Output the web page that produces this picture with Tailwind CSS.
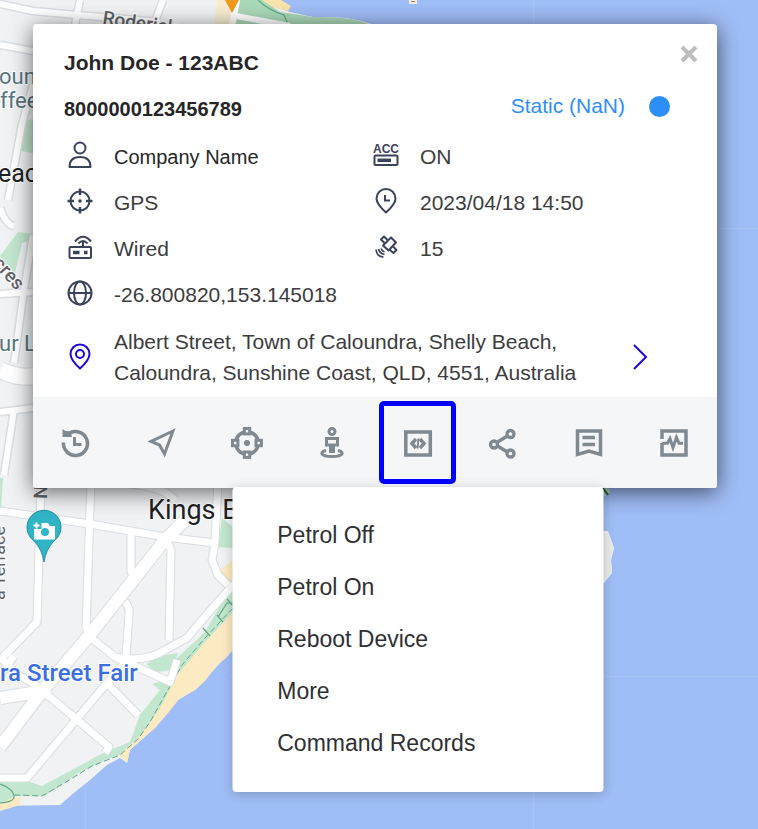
<!DOCTYPE html>
<html lang="en">
<head>
<meta charset="utf-8">
<meta name="viewport" content="width=device-width, initial-scale=1">
<title>Vehicle tracker</title>
<script src="https://cdn.jsdelivr.net/npm/@tailwindcss/browser@4"></script>
</head>
<body class="font-['Liberation_Sans',Arial,sans-serif] text-[21px] text-[#3c3c3e]">
<main class="relative min-h-screen overflow-hidden bg-[#9fbdf6] px-[33px] py-6 [@media(min-width:700px)]:pr-[41px]">

  <!-- Map -->
  <svg class="absolute inset-0 h-full w-full font-[Roboto,sans-serif]" viewBox="0 0 758 829" preserveAspectRatio="xMinYMin slice" role="img" aria-label="Map of Caloundra">
    <rect width="758" height="829" fill="#9fbdf6"/>
    <g stroke="#a9c4f7" stroke-width="1"><path d="M85.500 750V829M533.500 0V829M230 676.500H758M700 228.500H758"/></g>
    <!-- land -->
    <path d="M0 0H258L290 12 313 17Q350 16 368 23L500 60V480L606 490 600 500V531L608 531 614 548 611 560 612 573 604 583 500 600 233 648 205 680 195 690 178 700 155 728 130 750 127 763 120 758 107 765 90 780 75 792 60 805 0 806Z" fill="#f0f2f4"/>
    <path d="M604 500H616V530H604Z" fill="#9fbdf6"/>
    <path d="M603 531Q611 536 614 548L611 560 612 573 603 583Z" fill="#ebebeb"/>
    <path d="M594 476L608 494" stroke="#b9e0cd" stroke-width="7"/><path d="M594 476L608 495" stroke="#2c6650" stroke-width="2"/>
    <!-- beach -->
    <path d="M258 0L281 0 291 6 288 11 275 8Z" fill="#f9e3ac"/>
    <path d="M217 0H238V24H214Z" fill="#f8ecd0"/>
    <path d="M233 603V650L226 658 216 666 205 681 195 690 180 698 168 713 155 728 144 737 130 750 127 763 119 756 140 735 160 705 180 670Z" fill="#fbeac2"/>
    <path d="M233 560L219 571 222 580 228 584 233 580Z" fill="#fbeac2"/>
    <path d="M0 811L20 805 22 797 0 800Z" fill="#fbeac2"/>
    <!-- parks -->
    <g fill="#c3e6cf">
      <path d="M240 0H262L280 12 313 17Q350 16 368 24H236Z" fill="#a9d8b8"/>
      <path d="M24 121L33 119V153L21 151Z"/>
      <path d="M0 256L18 232 33 234V240L22 243 14 277Z"/>
      <path d="M0 478H3L1 510H0Z"/>
      <path d="M222 518L233 527V548L218 547Z"/>
      <path d="M233 583V612L205 642 178 674 160 708 140 736 119 755 105 760 80 772 45 796 15 796 0 804V782H30L42 786 105 752 130 742 140 715 160 690 152 684 167 680 175 660 205 632Z"/>
      <path d="M146 664L160 656 178 653 172 670 155 672Z"/>
    </g>
    <path d="M233 608L205 638 182 665 165 695 150 722 138 739 120 755 92 766 66 782 42 796 15 795" fill="none" stroke="#62a983" stroke-width="1" stroke-dasharray="6 3"/>
    <path d="M0 784Q12 788 14 795T0 803M203 628L210 636M217 615L223 622M227 599L233 606M218 617L227 603 233 603M258 0Q268 10 284 15L288 24" fill="none" stroke="#62a983" stroke-width="1.200"/>
    <!-- roads: casing, then surface -->
    <g fill="none" stroke="#dadde1" stroke-linejoin="round">
      <path stroke-width="9" d="M0 4L33 11 77 15 160 22M80 0L74 30M163 0L154 24M0 45L33 51M33 85L22 124 8 200M0 208Q6 225 14 226M33 235L24 290 14 363M33 292L0 294M0 412L33 408M14 410L4 475"/>
      <path stroke-width="9" d="M0 511L90 524 165 537 215 543M41 480L37 622 3 657M91 480L86 628 91 637M131 530V572L137 578M165 537L171 550 169 640M125 602Q130 607 129 615L126 655M90 637L115 657Q145 663 165 650L187 638 215 605 235 583M218 480L215 543 212 560 218 575 228 585M45 693L75 718 109 747 105 753M107 683L138 715M0 778H27L107 683 130 657M100 483Q160 482 175 500M0 657L18 675 45 690M115 657L170 682 177 660M14 656L0 675"/>
      <path stroke-width="14" d="M185 520L165 540 88 637 43 690 0 747M0 698L50 690"/>
      <path stroke-width="18" d="M0 370Q20 380 40 375"/>
    </g>
    <g fill="none" stroke="#ffffff" stroke-linejoin="round">
      <path stroke-width="6" d="M0 4L33 11 77 15 160 22M80 0L74 30M163 0L154 24M0 45L33 51M33 85L22 124 8 200M0 208Q6 225 14 226M33 235L24 290 14 363M33 292L0 294M0 412L33 408M14 410L4 475M237 0L232 24M236 16L290 26"/>
      <path stroke-width="7" d="M0 511L90 524 165 537 215 543M41 480L37 622 3 657M91 480L86 628 91 637M131 530V572L137 578M165 537L171 550 169 640M125 602Q130 607 129 615L126 655M90 637L115 657Q145 663 165 650L187 638 215 605 235 583M218 480L215 543 212 560 218 575 228 585M45 693L75 718 109 747 105 753M107 683L138 715M0 778H27L107 683 130 657M100 483Q160 482 175 500M0 657L18 675 45 690M115 657L170 682 177 660M14 656L0 675"/>
      <path stroke-width="12" d="M185 520L165 540 88 637 43 690 0 747M0 698L50 690"/>
      <path stroke-width="16" d="M0 370Q20 380 40 375"/>
    </g>
    <!-- pins -->
    <path d="M225 0H239L232 13Z" fill="#f29a1e"/>
    <path d="M410 0H416V3H410Z" fill="#b87445" stroke="#f2ede8" stroke-width="2"/>
    <path d="M44 562Q42 549 34 541A17 17 0 1 1 54 541Q46 549 44 562Z" fill="#2fb5c6" stroke="#2593a2" stroke-width="1"/>
    <path d="M34 529V539.500H55V526H50L48 523H41.500V529Z" fill="#fff"/><circle cx="45" cy="532" r="4" fill="#2fb5c6"/><path d="M36.500 522.500V528.500M33.500 525.500H39.500" stroke="#fff" stroke-width="2"/>
    <!-- labels -->
    <g stroke="#fff" stroke-width="2" paint-order="stroke" stroke-linejoin="round">
      <text x="148" y="519" font-size="27" fill="#202124">Kings Beach</text>
      <text x="0" y="681" font-size="24" font-weight="500" fill="#3b6fe0">ra Street Fair</text>
      <text x="-2" y="182" font-size="25" fill="#202124">each</text>
      <g font-size="22" fill="#56757f"><text x="-1" y="84">oun</text><text x="0" y="108">ffee</text><text x="-1" y="351">ur L</text></g>
      <g font-size="19" font-weight="500" fill="#5f6368">
        <text transform="translate(102 24) rotate(8)">Roderick</text>
        <text transform="translate(-8 264) rotate(48)">cres</text>
        <text transform="translate(47 499) rotate(-88)">N</text>
        <text font-size="18" font-weight="400" transform="translate(5 600) rotate(-90)">a Terrace</text>
      </g>
    </g>
  </svg>

  <!-- Device card -->
  <section class="relative rounded-[4px] bg-white shadow-[0_4px_22px_rgba(0,0,0,0.6)]" aria-label="Device details">
    <div class="px-[31px] pt-4">
      <header class="relative">
        <h1 class="flex h-[46px] items-center font-bold text-[#262628]">John Doe - 123ABC</h1>
        <button type="button" aria-label="Close" class="absolute -top-1 right-[-21px] flex size-9 items-center justify-center text-[#bdbdbd]">
          <svg class="size-[18px]" viewBox="0 0 18 18" fill="none" stroke="currentColor" stroke-width="4" aria-hidden="true"><path d="M2 2L16 16M16 2L2 16"/></svg>
        </button>
        <div class="flex h-[46px] items-center justify-between pr-4">
          <p class="text-[20px] font-bold text-[#262628]">8000000123456789</p>
          <p class="flex items-center gap-6 pb-1.5 text-[#2e8ef7]">Static (NaN) <span class="size-[21px] rounded-full bg-[#2e8ef7]"></span></p>
        </div>
      </header>

      <ul class="grid grid-cols-[306fr_316fr] pt-0.5 leading-[46px]">
        <li class="flex items-center gap-[18px] text-[20px] text-[#262628]">
          <svg class="h-7 w-8 shrink-0 -translate-y-0.5" viewBox="0 0 32 28" fill="none" stroke="#3b435a" stroke-width="2" aria-hidden="true"><circle cx="16" cy="7" r="5.500"/><path d="M5.500 26Q5.500 16 16 16T26.500 26Z" stroke-linejoin="round"/></svg>
          Company Name</li>
        <li class="flex items-center gap-[18px]">
          <svg class="h-7 w-8 shrink-0 -translate-y-0.5" viewBox="0 0 32 28" aria-hidden="true"><text x="16" y="12" text-anchor="middle" font-size="12" font-weight="bold" fill="#3b435a">ACC</text><rect x="4.500" y="14.500" width="23" height="9.500" rx="1" fill="none" stroke="#3b435a" stroke-width="2"/><path d="M7.500 19.300H21" stroke="#3b435a" stroke-width="3.500"/></svg>
          ON</li>
        <li class="flex items-center gap-[18px]">
          <svg class="h-7 w-8 shrink-0 -translate-y-0.5" viewBox="0 0 32 28" fill="none" stroke="#3b435a" stroke-width="2" aria-hidden="true"><circle cx="16" cy="14" r="9.500"/><path d="M16 1.500V8M16 20V26.500M3.500 14H10M22 14H28.500" stroke-width="2.500"/><circle cx="16" cy="14" r="1.800" fill="#3b435a" stroke="none"/></svg>
          GPS</li>
        <li class="flex items-center gap-[18px]">
          <svg class="h-7 w-8 shrink-0 -translate-y-0.5" viewBox="0 0 32 28" fill="none" stroke="#3b435a" stroke-width="2" aria-hidden="true"><path d="M16 25.500Q6.500 17 6.500 11.500A9.500 9.500 0 0 1 25.500 11.500Q25.500 17 16 25.500Z" stroke-linejoin="round"/><path d="M15 8V13.500H20"/></svg>
          2023/04/18 14:50</li>
        <li class="flex items-center gap-[18px]">
          <svg class="h-7 w-8 shrink-0 -translate-y-0.5" viewBox="0 0 32 28" fill="none" stroke="#3b435a" stroke-width="2" aria-hidden="true"><rect x="5.500" y="14" width="21.500" height="11" rx="1"/><path d="M19 9V14M11 8.500Q19 -1 27 8.500M14.500 10.500Q19 5.500 23.500 10.500"/><path d="M9 19.500H15.500M20 19.500H23.500" stroke-width="3.500"/></svg>
          Wired</li>
        <li class="flex items-center gap-[18px]">
          <svg class="h-7 w-8 shrink-0 -translate-y-0.5" viewBox="0 0 32 28" fill="none" stroke="#3b435a" stroke-width="2" stroke-linejoin="round" aria-hidden="true"><path d="M21 4.500L26 9.500 18.500 17.500 13 12.500Z"/><path d="M17.500 7L14 3.500 11 6.500 14.500 10M23 13.500L26.500 17 23.500 20 20 17"/><path d="M11 15.500Q12 18 14.500 19M8.500 16Q9.500 20.500 14.500 21.500M6 16.500Q6.500 23.500 13.500 24" stroke-width="1.700"/></svg>
          15</li>
        <li class="col-span-2 flex items-center gap-[18px]">
          <svg class="h-7 w-8 shrink-0 -translate-y-0.5" viewBox="0 0 32 28" fill="none" stroke="#3b435a" stroke-width="2" aria-hidden="true"><circle cx="16" cy="14" r="11.500"/><ellipse cx="16" cy="14" rx="6" ry="11.500"/><path d="M4.500 14H27.500"/></svg>
          -26.800820,153.145018</li>
      </ul>

      <div class="flex items-center gap-[18px] pt-2 pr-[30px] pb-[9px]">
        <svg class="h-7 w-8 shrink-0" viewBox="0 0 32 28" fill="none" stroke="#1c08dc" stroke-width="2" aria-hidden="true"><path d="M16 25.500Q6.500 17 6.500 11A9.500 9.500 0 0 1 25.500 11Q25.500 17 16 25.500Z" stroke-linejoin="round"/><circle cx="16" cy="11" r="4"/></svg>
        <address class="flex-1 leading-[31px] not-italic">Albert Street, Town of Caloundra, Shelly Beach, Caloundra, Sunshine Coast, QLD, 4551, Australia</address>
        <button type="button" aria-label="Open location" class="-ml-[18px] flex size-8 items-center justify-center">
          <svg class="h-7 w-4" viewBox="0 0 16 28" fill="none" stroke="#1c08dc" stroke-width="2" aria-hidden="true"><path d="M2 2L14 14 2 26"/></svg>
        </button>
      </div>
    </div>

    <nav class="grid grid-cols-8 rounded-b-[2px] bg-[#f4f6f8] py-1 text-[#808890]" aria-label="Device actions">
      <button type="button" aria-label="History" class="flex h-[83px] items-center justify-center">
        <svg class="size-8" viewBox="0 0 32 32" fill="none" stroke="currentColor" stroke-width="3.500" aria-hidden="true"><path d="M7.500 7.500A12 12 0 1 1 3.500 15.500"/><path d="M14.500 10V17.500H21.500" stroke-width="3"/><path d="M2.500 2L5.500 4 10.500 4.500 12 10H2.500Z" fill="currentColor" stroke="none"/></svg>
      </button>
      <button type="button" aria-label="Navigate" class="flex h-[83px] items-center justify-center">
        <svg class="size-8" viewBox="0 0 32 32" fill="none" stroke="currentColor" stroke-width="3" aria-hidden="true"><path d="M28 4L6 14.500 14.500 18 19.500 27Z"/></svg>
      </button>
      <button type="button" aria-label="Geofence" class="flex h-[83px] items-center justify-center">
        <svg class="size-8" viewBox="0 0 32 32" fill="none" stroke="currentColor" stroke-width="3.500" aria-hidden="true"><circle cx="16" cy="16" r="11.300"/><circle cx="16" cy="16" r="3" fill="currentColor" stroke="none"/><g fill="#f4f6f8" stroke-width="3"><rect x="13.300" y="1.500" width="5.400" height="5.400"/><rect x="13.300" y="25" width="5.400" height="5.400"/><rect x="1.500" y="13.300" width="5.400" height="5.400"/><rect x="25" y="13.300" width="5.400" height="5.400"/></g></svg>
      </button>
      <button type="button" aria-label="Street view" class="flex h-[83px] items-center justify-center">
        <svg class="size-8" viewBox="0 0 32 32" fill="none" stroke="currentColor" stroke-width="3" aria-hidden="true"><circle cx="16" cy="4.500" r="3"/><path d="M10.500 11.500H21.500V18H10.500Z"/><path d="M16 18V26" stroke-width="6"/><path d="M10 23.500C3 25 4.500 29.500 16 29.500S29 25 22 23.500"/></svg>
      </button>
      <div class="relative flex justify-center">
        <button type="button" aria-label="Commands" aria-haspopup="true" aria-expanded="true" aria-controls="command-menu" class="flex h-[83px] w-[77px] items-center justify-center rounded-[5px] border-[5px] border-[#0000ff]">
          <svg class="size-8" viewBox="0 0 32 32" fill="none" stroke="currentColor" stroke-width="3.500" aria-hidden="true"><rect x="3.800" y="5" width="24.500" height="23"/><path d="M14 12L10 16.500 14 21M18 12L22 16.500 18 21" stroke-width="3.500"/><path d="M16.500 11.500L15.500 21.500" stroke-width="2"/></svg>
        </button>
        <ul id="command-menu" class="absolute top-full left-1/2 z-10 mt-[3px] w-[371px] -translate-x-1/2 rounded-[4px] bg-white pt-[22px] pb-[23px] text-[23px] leading-[52px] text-[#2f3033] shadow-[0_2px_12px_rgba(0,0,0,0.2)]">
          <li><button type="button" class="w-full px-[45px] text-left">Petrol Off</button></li>
          <li><button type="button" class="w-full px-[45px] text-left">Petrol On</button></li>
          <li><button type="button" class="w-full px-[45px] text-left">Reboot Device</button></li>
          <li><button type="button" class="w-full px-[45px] text-left">More</button></li>
          <li><button type="button" class="w-full px-[45px] text-left">Command Records</button></li>
        </ul>
      </div>
      <button type="button" aria-label="Share" class="flex h-[83px] items-center justify-center">
        <svg class="size-8" viewBox="0 0 32 32" fill="none" stroke="currentColor" stroke-width="3.300" aria-hidden="true"><path d="M10.500 15L20.500 9M10.500 19L20.500 25"/><circle cx="7" cy="17.500" r="3.500"/><circle cx="23.500" cy="7" r="3.500"/><circle cx="23.500" cy="26.500" r="3.500"/></svg>
      </button>
      <button type="button" aria-label="Report" class="flex h-[83px] items-center justify-center">
        <svg class="size-8" viewBox="0 0 32 32" fill="none" stroke="currentColor" stroke-width="3.500" aria-hidden="true"><path d="M4.500 4H27.500V27.500L16 24 4.500 27.500Z"/><path d="M9.500 10.500H22M9.500 17.500H22" stroke-width="3.500"/></svg>
      </button>
      <button type="button" aria-label="Diagnostics" class="flex h-[83px] items-center justify-center">
        <svg class="size-8" viewBox="0 0 32 32" fill="none" stroke="currentColor" stroke-width="3.500" aria-hidden="true"><path d="M4 12V4H28V28H4V16"/><path d="M4 16.300H9.500L12 11.500 15 20.500 18.500 10.500 21 16.300H25" stroke-width="3"/></svg>
      </button>
    </nav>
  </section>
</main>
</body>
</html>
